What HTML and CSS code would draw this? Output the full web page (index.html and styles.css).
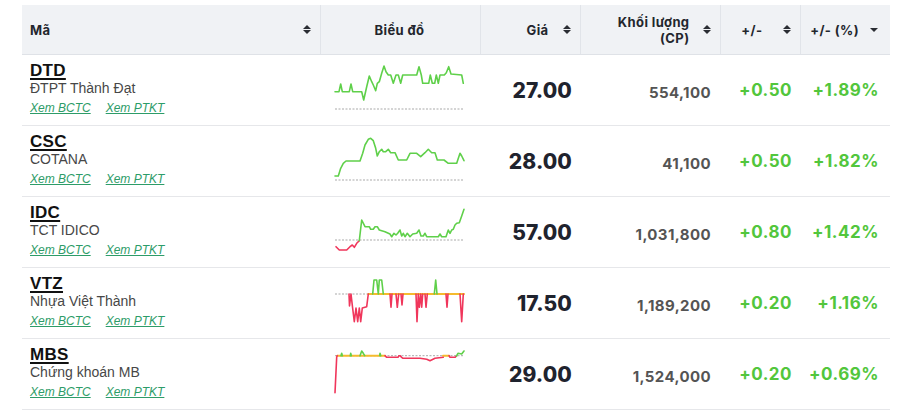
FILE: index.html
```html
<!DOCTYPE html>
<html lang="vi">
<head>
<meta charset="utf-8">
<link rel="stylesheet" href="styles.css">
</head>
<body>
<table class="grid">
  <colgroup>
    <col class="c-ma"><col class="c-chart"><col class="c-gia"><col class="c-kl"><col class="c-chg"><col class="c-pct">
  </colgroup>
  <thead>
    <tr>
      <th><div class="th-in th-left"><span>Mã</span><span class="sort"></span></div></th>
      <th><div class="th-in th-center"><span>Biểu đồ</span></div></th>
      <th><div class="th-in th-right g-gia"><span>Giá</span><span class="sort"></span></div></th>
      <th><div class="th-in th-right g-kl"><span class="two"><span class="ln">Khối lượng</span><span class="ln">(CP)</span></span><span class="sort"></span></div></th>
      <th><div class="th-in th-right g-chg"><span>+/-</span><span class="sort"></span></div></th>
      <th><div class="th-in th-right g-pct"><span>+/- (%)</span><span class="caret"></span></div></th>
    </tr>
  </thead>
  <tbody>
    <tr>
      <td class="name"><a class="tick" href="#">DTD</a><div class="co">ĐTPT Thành Đạt</div><div class="links"><a href="#">Xem BCTC</a><a href="#">Xem PTKT</a></div></td>
      <td class="chart"><svg viewBox="0 0 160 70" width="160" height="70">
        <line x1="15" y1="54" x2="144" y2="54" class="ref"/>
        <polyline class="up" points="15,36.7 19,36.7 20.7,29 22.3,36.7 29.3,36.7 31,29 32.7,36.7 41.7,36.7 43.7,45 46.7,31.7 49.3,21 51.7,26.7 53.3,30 55.7,35.7 57.3,28.3 59.3,26.7 61.7,18.3 64,11 66,16.7 68.3,20 70.7,20 73.3,28.3 76,20 78.3,20 80.7,28.3 82.7,20 96.7,20 99,11.7 101.3,20 102.7,28.3 108.7,28.3 110.3,20 112.3,28.3 114.7,28.3 116.3,20 118.3,28.3 120,20 124.3,20 126.3,17.7 128.7,11.7 131,19 141.7,20 143.3,28.3"/>
      </svg></td>
      <td class="num price">27.00</td>
      <td class="num vol">554,100</td>
      <td class="num chg">+0.50</td>
      <td class="num pct">+1.89%</td>
    </tr>
    <tr>
      <td class="name"><a class="tick" href="#">CSC</a><div class="co">COTANA</div><div class="links"><a href="#">Xem BCTC</a><a href="#">Xem PTKT</a></div></td>
      <td class="chart"><svg viewBox="0 0 160 70" width="160" height="70">
        <line x1="15" y1="54" x2="144" y2="54" class="ref"/>
        <polyline class="up" points="15,50 18.3,50 20.7,42.3 23.3,37.3 26,35 40,35 42.7,27.3 45,19 48.3,13.3 50.7,12.3 53.3,14.7 55.7,22.3 57.3,30 59.3,25.7 61.7,23.3 63.3,25.7 65.7,25.7 68.3,23.3 70.7,26.7 75,26.7 78.3,34 86.7,34 90,27.3 96.7,27.3 100.7,30.7 105,26.7 108.3,23.3 111.7,26.7 115,26.7 117.3,34 124,34 128.3,37.3 136.7,37.3 140,27.3 141.7,30 144,34.7"/>
      </svg></td>
      <td class="num price">28.00</td>
      <td class="num vol">41,100</td>
      <td class="num chg">+0.50</td>
      <td class="num pct">+1.82%</td>
    </tr>
    <tr>
      <td class="name"><a class="tick" href="#">IDC</a><div class="co">TCT IDICO</div><div class="links"><a href="#">Xem BCTC</a><a href="#">Xem PTKT</a></div></td>
      <td class="chart"><svg viewBox="0 0 160 70" width="160" height="70">
        <line x1="15" y1="43" x2="144" y2="43" class="ref"/>
        <polyline class="dn" points="16,49.7 19.3,53 26.7,53 30,49.7 32.3,48 34.3,50.3 36.7,46.3 39.3,43.7"/>
        <polyline class="up" points="39.3,43.7 41.7,23 45,29.7 49.3,29.7 50.7,32.3 53.3,32.3 55,29.7 57.3,29.7 59.3,33 65,34.7 70,37 71.7,39.7 74,36.3 76,38 77.7,36.3 80,33 81.7,39 83.3,36.3 85,39.7 87.3,36.3 90,39.7 92.7,37 96.7,36.3 99,33 101,39 103.3,39 105,36.3 106.7,39.7 118.3,39.7 120,37 121.7,39.7 126,39.7 128.3,33 130,36.3 131.7,33 133.3,32.3 135,28 136.7,26.3 139.3,25.7 141.7,19 144,12.3"/>
      </svg></td>
      <td class="num price">57.00</td>
      <td class="num vol">1,031,800</td>
      <td class="num chg">+0.80</td>
      <td class="num pct">+1.42%</td>
    </tr>
    <tr>
      <td class="name"><a class="tick" href="#">VTZ</a><div class="co">Nhựa Việt Thành</div><div class="links"><a href="#">Xem BCTC</a><a href="#">Xem PTKT</a></div></td>
      <td class="chart"><svg viewBox="0 0 160 70" width="160" height="70">
        <line x1="15" y1="26" x2="144" y2="26" class="ref"/>
        <polyline class="eq" points="48.3,26 144,26"/>
        <polyline class="dn" points="29,26 29.5,38 31,26 32.5,39 34.3,53.7 36,40 37.7,53.7 39.3,40 40.7,53.7 42.3,40 46.7,38.7 48.3,26"/>
        <polyline class="up" points="52.7,26 54,12 56.7,12 58.3,26 59.3,12 61.7,12 63.3,26"/>
        <polyline class="dn" points="70,26 71,39.3 72,26"/>
        <polyline class="dn" points="76,26 77.3,39.3 78.7,26"/>
        <polyline class="dn" points="81,26 82,37 83,26"/>
        <polyline class="dn" points="96,26 97,53.7 98.3,26 99.3,39.3 100.7,26 101.7,39.3 102.7,26"/>
        <polyline class="dn" points="105,26 106,39.3 107.3,26"/>
        <polyline class="up" points="114.3,26 115.7,12 117,26"/>
        <polyline class="dn" points="126,26 127,39.3 128,26"/>
        <polyline class="dn" points="140,26 141.7,53.7 143.3,26"/>
      </svg></td>
      <td class="num price">17.50</td>
      <td class="num vol">1,189,200</td>
      <td class="num chg">+0.20</td>
      <td class="num pct">+1.16%</td>
    </tr>
    <tr>
      <td class="name"><a class="tick" href="#">MBS</a><div class="co">Chứng khoán MB</div><div class="links"><a href="#">Xem BCTC</a><a href="#">Xem PTKT</a></div></td>
      <td class="chart"><svg viewBox="0 0 160 70" width="160" height="70">
        <line x1="15" y1="16.7" x2="144" y2="16.7" class="ref"/>
        <polyline class="eq" points="17.3,16.7 65,16.7"/>
        <polyline class="eq" points="123,16.7 129,16.7"/>
        <polyline class="dn" points="15,53.7 16.7,18 17.3,16.7"/>
        <polyline class="up" points="21,16.7 21.7,14.3 22.3,16.7"/>
        <polyline class="up" points="30.3,16.7 30.7,14.3 31.3,16.7"/>
        <polyline class="up" points="40,16.7 41.7,12 43.3,14.3 44.7,16.7"/>
        <polyline class="up" points="59.7,16.7 60,14.3 60.7,16.7"/>
        <polyline class="dn" points="65,16.7 66.7,18.3 78,18.3 79,16.7 80,16.7 81.7,18.3 83,19.3 100,19.3 106.7,20.3 110,21.7 115,19.3 123.3,18.3"/>
        <polyline class="dn" points="129,16.7 130,18.3 135,18.3 136.5,17"/>
        <polyline class="up" points="136.5,17 138,14.3 141.7,15 144,12"/>
      </svg></td>
      <td class="num price">29.00</td>
      <td class="num vol">1,524,000</td>
      <td class="num chg">+0.20</td>
      <td class="num pct">+0.69%</td>
    </tr>
  </tbody>
</table>
</body>
</html>
```
FILE: styles.css
```css
html, body {
  margin: 0;
  padding: 0;
  background: #ffffff;
}
body {
  padding: 5px 14px 0 22px;
  font-family: Inter, "Liberation Sans", sans-serif;
  color: #222;
}
.grid {
  border-collapse: collapse;
  table-layout: fixed;
  width: 868px;
}
.c-ma { width: 298px; }
.c-chart { width: 160px; }
.c-gia { width: 100px; }
.c-kl { width: 140px; }
.c-chg { width: 80px; }
.c-pct { width: 90px; }

thead th {
  background: #f0f2f5;
  height: 49px;
  padding: 0;
  border-left: 1px solid #e1e4e9;
  border-bottom: 1px solid #dfe2e7;
  font-size: 13px;
  font-weight: 700;
  letter-spacing: 0.4px;
  color: #23262d;
  vertical-align: middle;
}
thead th:first-child { border-left: none; }
.th-in {
  display: flex;
  align-items: center;
  padding: 0 9px 0 8px;
}
.th-left { justify-content: space-between; }
.th-center { justify-content: center; }
.th-right { justify-content: flex-end; }
.g-gia { gap: 14px; }
.g-kl { gap: 13px; }
.g-chg { gap: 20px; }
.g-pct { gap: 11px; padding-right: 12px; }
.two {
  display: flex;
  flex-direction: column;
  align-items: flex-end;
}
.ln {
  display: block;
  height: 16px;
  line-height: 16px;
  white-space: nowrap;
}
.sort {
  display: inline-flex;
  flex-direction: column;
  gap: 1px;
  width: 8px;
}
.sort::before, .sort::after {
  content: "";
  width: 0;
  height: 0;
  border-left: 4px solid transparent;
  border-right: 4px solid transparent;
}
.sort::before { border-bottom: 4px solid #2a2d33; }
.sort::after { border-top: 4px solid #2a2d33; }
.caret {
  width: 0;
  height: 0;
  border-left: 4px solid transparent;
  border-right: 4px solid transparent;
  border-top: 4px solid #2a2d33;
}

tbody td {
  height: 70px;
  padding: 0;
  border-bottom: 1px solid #e6e7ea;
  vertical-align: middle;
}
td.name {
  padding: 0 8px;
  font-family: "Liberation Sans", Arial, sans-serif;
  vertical-align: top;
}
.tick {
  display: block;
  margin-top: 6px;
  font-size: 17px;
  line-height: 19px;
  font-weight: 700;
  color: #111;
  text-decoration: underline;
  text-decoration-thickness: 2px;
  text-underline-offset: 2px;
  width: max-content;
  letter-spacing: 0.3px;
}
.co {
  font-size: 14px;
  line-height: 17px;
  color: #474747;
}
.links {
  display: flex;
  gap: 15px;
  margin-top: 3px;
  font-size: 12px;
  line-height: 17px;
  font-style: italic;
}
.links a {
  color: #2d9c68;
  text-decoration: underline;
}
td.chart svg { display: block; }
.ref {
  stroke: #a9a9a9;
  stroke-width: 1;
  stroke-dasharray: 2 1.5;
}
polyline {
  fill: none;
  stroke-width: 1.6;
  stroke-linejoin: round;
  stroke-linecap: round;
}
.up { stroke: #5fd04a; }
.dn { stroke: #f0365b; }
.eq { stroke: #f5bb2e; stroke-width: 2; }

td.num {
  text-align: right;
  font-weight: 700;
  padding-right: 8px;
}
.price {
  font-size: 21px;
  font-weight: 800 !important;
  color: #1f232e;
  letter-spacing: 0.1px;
}
td.vol {
  height: 65px;
  padding-top: 5px;
  font-size: 15px;
  color: #545454;
  padding-right: 9px;
  letter-spacing: 0.4px;
}
.chg, .pct {
  font-size: 17px;
  color: #52c63c;
  letter-spacing: 0.5px;
}
td.pct { padding-right: 11px; }
```
